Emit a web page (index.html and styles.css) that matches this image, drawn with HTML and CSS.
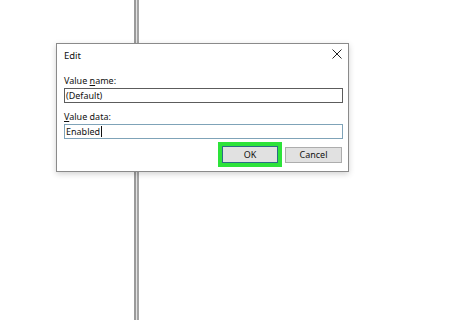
FILE: index.html
```html
<!DOCTYPE html>
<html lang="en">
<head>
  <meta charset="utf-8"/>
  <title>Edit String</title>
  <link rel="stylesheet" href="styles.css">
</head>
<body>
  <div class="dialog">
    <div class="title-bar">
      <span class="title">Edit</span>
      <svg class="close" width="10" height="10" viewBox="0 0 10 10">
        <path d="M0.5 0.5 L9.5 9.5 M9.5 0.5 L0.5 9.5" stroke="#222" stroke-width="1" fill="none"/>
      </svg>
    </div>
    <div class="body">
      <label class="field-label">Value <u>n</u>ame:</label>
      <div class="field">(Default)</div>
      <label class="field-label second"><u>V</u>alue data:</label>
      <div class="field focused">Enabled<span class="caret"></span></div>
      <div class="buttons">
        <button class="btn ok">OK</button>
        <button class="btn">Cancel</button>
      </div>
    </div>
  </div>
</body>
</html>
```

FILE: styles.css
```css
body {
  margin: 0;
  padding: 43px 0 0 56px;
  height: 320px;
  box-sizing: border-box;
  font-family: "Noto Sans", "Open Sans", sans-serif;
  color: #111;
  background-color: #fff;
  background-image:
    linear-gradient(#9a9a9a, #9a9a9a),
    linear-gradient(#e2e2e2, #e2e2e2),
    linear-gradient(#a4a4a4, #a4a4a4);
  background-size: 2px 100%, 1px 100%, 2px 100%;
  background-position: 134px 0, 136px 0, 137px 0;
  background-repeat: no-repeat;
  overflow: hidden;
}
.dialog {
  width: 291px;
  height: 127px;
  background: #fff;
  border: 1px solid #8a8a8a;
  box-shadow: 0 2px 6px rgba(0, 0, 0, 0.18);
}
.title-bar {
  height: 22px;
  display: flex;
  align-items: center;
  justify-content: space-between;
  padding: 0 6px 0 7px;
}
.title {
  font-size: 9.5px;
}
.close {
  margin-right: 0;
  margin-top: -2px;
}
.body {
  padding: 0 5px 0 7px;
}
.field-label {
  display: block;
  font-size: 9px;
  line-height: 15px;
  margin-top: 7px;
}
.field-label.second {
  margin-top: 6px;
}
.field-label u {
  text-decoration-thickness: 1px;
  text-underline-offset: 1px;
}
.field {
  height: 13px;
  border: 1px solid #5c5c5c;
  font-size: 9px;
  line-height: 13px;
  padding-left: 1px;
  display: flex;
  align-items: center;
}
.field.focused {
  border-color: #7fa3b8;
}
.caret {
  display: inline-block;
  width: 1px;
  height: 11px;
  background: #111;
  margin-left: 1px;
}
.buttons {
  display: flex;
  justify-content: flex-end;
  align-items: center;
  gap: 7px;
  margin-top: 7px;
  padding-right: 1px;
}
.btn {
  width: 57px;
  height: 16px;
  padding: 0;
  font-family: "Noto Sans", "Open Sans", sans-serif;
  font-size: 9px;
  line-height: 14px;
  color: #111;
  background: #e1e1e1;
  border: 1px solid #adadad;
}
.btn.ok {
  width: 56px;
  height: 17px;
  border-color: #2b6c85;
  outline: 4px solid #2de33a;
}
```
